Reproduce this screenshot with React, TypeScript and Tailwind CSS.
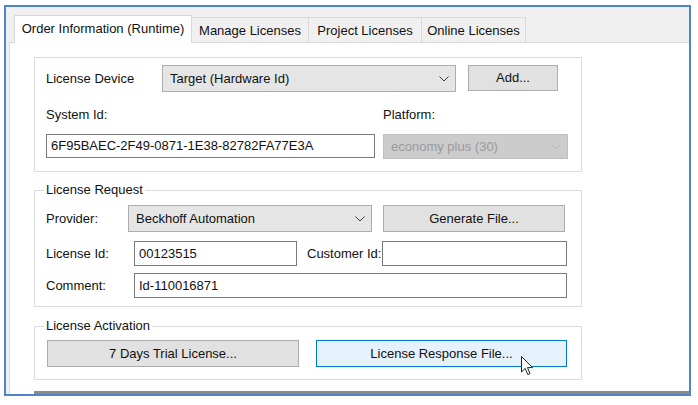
import React from "react"

const font = { fontFamily: '"Liberation Sans", Arial, sans-serif' }

function Chevron({ disabled }: { disabled?: boolean }) {
    return (
        <svg width="10" height="6" viewBox="0 0 10 6" className="shrink-0">
            <polyline points="0.5,0.5 5,5 9.5,0.5" fill="none" stroke={disabled ? "#bcbcbc" : "#3c3c3c"} strokeWidth="1" />
        </svg>
    )
}

function Combo({ text, className, disabled }: { text: string; className: string; disabled?: boolean }) {
    return (
        <div
            className={`flex items-center justify-between pl-[7px] pr-[6px] border ${
                disabled ? "bg-[#cccccc] border-[#bfbfbf] text-[#9a9a9a]" : "bg-[#e5e5e5] border-[#adadad] text-[#111]"
            } ${className}`}
        >
            <span>{text}</span>
            <Chevron disabled={disabled} />
        </div>
    )
}

function Button({ text, className, hot }: { text: string; className: string; hot?: boolean }) {
    return (
        <div
            className={`flex items-center justify-center border ${
                hot ? "bg-[#e5f1fb] border-[#0078d7]" : "bg-[#e1e1e1] border-[#adadad]"
            } ${className}`}
        >
            {text}
        </div>
    )
}

function TextBox({ text, className }: { text?: string; className: string }) {
    return (
        <div className={`flex items-center pl-[4px] bg-white border border-[#7a7a7a] ${className}`}>
            {text}
        </div>
    )
}

function Group({ caption, className, children }: { caption?: string; className: string; children: React.ReactNode }) {
    return (
        <div className={`relative w-[548px] border border-[#dcdcdc] ${className}`}>
            {caption && (
                <span className="absolute left-[9px] -top-[10px] bg-white px-[2px] leading-[18px]">{caption}</span>
            )}
            {children}
        </div>
    )
}

function Cursor() {
    return (
        <svg width="13" height="20" viewBox="0 0 13 20" className="absolute left-[521px] top-[356px]">
            <polygon
                points="0.5,0.5 0.5,16 4.2,12.4 6.8,18.6 9,17.6 6.5,11.6 11.5,11.6"
                fill="white"
                stroke="#222"
                strokeWidth="1"
                strokeLinejoin="round"
            />
        </svg>
    )
}

export default function App() {
    const tabs = ["Manage Licenses", "Project Licenses", "Online Licenses"]
    const tabWidths = ["w-[117px]", "w-[113px]", "w-[104px]"]

    return (
        <div className="relative w-[698px] h-[405px] bg-white pl-[4px] pt-[5px] text-[13px] text-[#111] whitespace-nowrap" style={font}>
            <div className="w-[687px] h-[391px] border-2 border-[#4f83cc] bg-[#f0f0f0] flex flex-col">
                <div className="flex-1 flex flex-col ml-[3px]">
                    <div className="h-[35px] flex items-end pl-[5px]">
                        <div className="w-[178px] h-[28px] bg-white border border-b-0 border-[#d9d9d9] flex items-center justify-center pb-[2px] relative top-[1px]">
                            Order Information (Runtime)
                        </div>
                        {tabs.map((t, i) => (
                            <div
                                key={t}
                                className={`${tabWidths[i]} h-[25px] border border-l-0 border-b-0 border-[#d9d9d9] flex items-center justify-center pt-[1px]`}
                            >
                                {t}
                            </div>
                        ))}
                    </div>
                    <div className="flex-1 bg-white border-l border-t border-[#d9d9d9] pl-[24px] pt-[14px] flex flex-col">
                        <Group className="h-[115px] flex flex-col pl-[11px] pt-[7px]">
                            <div className="flex items-start h-[27px]">
                                <span className="w-[116px] self-center">License Device</span>
                                <Combo text="Target (Hardware Id)" className="w-[294px] h-[27px]" />
                                <Button text="Add..." className="ml-[12px] w-[90px] h-[26px]" />
                            </div>
                            <div className="flex items-center h-[22px] mt-[12px]">
                                <span className="w-[337px]">System Id:</span>
                                <span>Platform:</span>
                            </div>
                            <div className="flex items-start mt-[8px]">
                                <TextBox text="6F95BAEC-2F49-0871-1E38-82782FA77E3A" className="w-[329px] h-[24px]" />
                                <Combo text="economy plus (30)" disabled className="ml-[8px] w-[185px] h-[25px]" />
                            </div>
                        </Group>

                        <Group caption="License Request" className="mt-[18px] h-[117px] flex flex-col pl-[11px] pt-[14px]">
                            <div className="flex items-center h-[27px]">
                                <span className="w-[82px]">Provider:</span>
                                <Combo text="Beckhoff Automation" className="w-[244px] h-[27px]" />
                                <Button text="Generate File..." className="ml-[11px] w-[182px] h-[27px]" />
                            </div>
                            <div className="flex items-center h-[25px] mt-[9px]">
                                <span className="w-[88px]">License Id:</span>
                                <TextBox text="00123515" className="w-[163px] h-[25px]" />
                                <span className="ml-[10px] w-[75px]">Customer Id:</span>
                                <TextBox className="w-[185px] h-[25px]" />
                            </div>
                            <div className="flex items-center h-[25px] mt-[7px]">
                                <span className="w-[88px]">Comment:</span>
                                <TextBox text="Id-110016871" className="w-[433px] h-[25px]" />
                            </div>
                        </Group>

                        <Group caption="License Activation" className="mt-[19px] h-[54px] flex items-start pl-[12px] pt-[13px]">
                            <Button text="7 Days Trial License..." className="w-[252px] h-[27px]" />
                            <Button text="License Response File..." hot className="ml-[17px] w-[251px] h-[27px]" />
                        </Group>

                        <div className="mt-auto h-[3px] bg-[#8a8a8a]" />
                    </div>
                </div>
            </div>
            <Cursor />
        </div>
    )
}
